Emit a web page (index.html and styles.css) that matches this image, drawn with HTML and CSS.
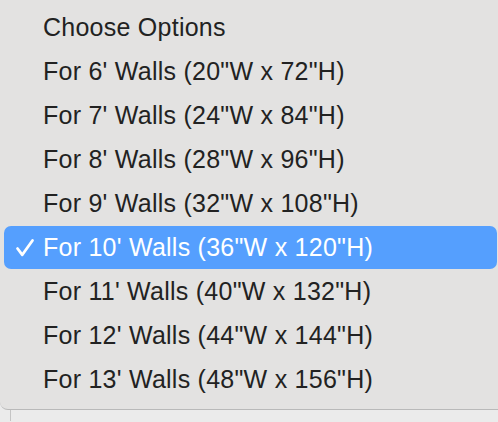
FILE: index.html
```html
<!DOCTYPE html>
<html>
<head>
<meta charset="utf-8">
<link rel="stylesheet" href="styles.css">
</head>
<body>
<div class="menu">
  <div class="item"><span class="check"></span><span class="label">Choose Options</span></div>
  <div class="item"><span class="check"></span><span class="label">For 6' Walls (20"W x 72"H)</span></div>
  <div class="item"><span class="check"></span><span class="label">For 7' Walls (24"W x 84"H)</span></div>
  <div class="item"><span class="check"></span><span class="label">For 8' Walls (28"W x 96"H)</span></div>
  <div class="item"><span class="check"></span><span class="label">For 9' Walls (32"W x 108"H)</span></div>
  <div class="item selected"><span class="check"><svg width="20" height="20" viewBox="0 0 20 20"><path d="M2.5 10.5 L7.3 16.8 L17.5 2.5" fill="none" stroke="#fff" stroke-width="2.8" stroke-linecap="round" stroke-linejoin="round"/></svg></span><span class="label">For 10' Walls (36"W x 120"H)</span></div>
  <div class="item"><span class="check"></span><span class="label">For 11' Walls (40"W x 132"H)</span></div>
  <div class="item"><span class="check"></span><span class="label">For 12' Walls (44"W x 144"H)</span></div>
  <div class="item"><span class="check"></span><span class="label">For 13' Walls (48"W x 156"H)</span></div>
</div>
<div class="below"><div class="rule"></div></div>
</body>
</html>
```
FILE: styles.css
```css
html, body {
  margin: 0;
  padding: 0;
}
body {
  background: #ebebeb;
  width: 498px;
  height: 422px;
  overflow: hidden;
  font-family: "Liberation Sans", Arial, sans-serif;
}
.menu {
  background: #e3e2e1;
  height: 410px;
  box-sizing: border-box;
  padding: 5px 1px 0 4px;
  border-bottom: 1px solid #b9b9b9;
  border-bottom-left-radius: 8px;
  display: flex;
  flex-direction: column;
}
.item {
  height: 44px;
  display: flex;
  align-items: center;
  color: #222222;
  font-size: 25px;
  letter-spacing: 0.25px;
  border-radius: 7px;
}
.item.selected {
  background: #559ffe;
  color: #ffffff;
  height: 43px;
  margin-top: 1px;
}
.check {
  width: 39px;
  flex: none;
  display: flex;
  justify-content: flex-start;
  padding-left: 11px;
  box-sizing: border-box;
}
.below {
  height: 11px;
  padding-left: 10px;
}
.rule {
  width: 1px;
  height: 100%;
  background: #c4c4c4;
}
```
